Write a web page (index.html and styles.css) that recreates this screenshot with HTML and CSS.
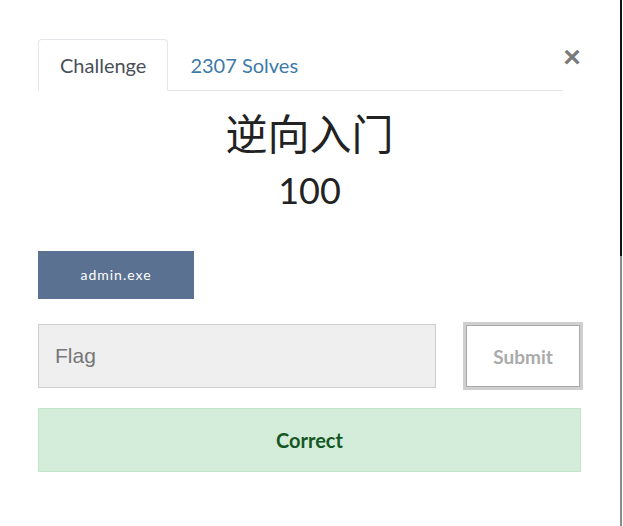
FILE: index.html
```html
<!DOCTYPE html>
<html lang="zh">
<head>
<meta charset="utf-8">
<title>Challenge</title>
<link rel="stylesheet" href="styles.css">
</head>
<body>
<div class="modal">
  <div class="header">
    <ul class="tabs">
      <li><a class="tab active">Challenge</a></li>
      <li><a class="tab">2307 Solves</a></li>
    </ul>
    <button class="close" aria-label="Close">&times;</button>
  </div>
  <h2 class="name">逆向入门</h2>
  <h3 class="value">100</h3>
  <div class="files">
    <a class="file">admin.exe</a>
  </div>
  <div class="submit-row">
    <input class="flag" type="text" placeholder="Flag">
    <button class="submit">Submit</button>
  </div>
  <div class="alert">Correct</div>
</div>
<div class="edge"><div class="edge-top"></div><div class="edge-bottom"></div></div>
</body>
</html>
```
FILE: styles.css
```css
html, body {
  margin: 0;
  padding: 0;
  background: #fff;
}
body {
  font-family: Lato, "Noto Sans CJK SC", sans-serif;
  color: #212529;
}
.modal {
  width: 543px;
  margin-left: 38px;
  padding-top: 39px;
}
.header {
  display: flex;
  align-items: flex-start;
}
.tabs {
  list-style: none;
  margin: 0;
  padding: 0;
  display: flex;
  width: 525px;
  border-bottom: 1px solid #e3e6ea;
}
.tab {
  display: block;
  margin-bottom: -1px;
  padding: 14px 21px;
  font-size: 20px;
  line-height: 22px;
  color: #3e7aa6;
  border: 1px solid transparent;
  border-radius: 4px 4px 0 0;
}
.tab.active {
  color: #495057;
  border-color: #e3e6ea #e3e6ea #fff;
  background: #fff;
}
.close {
  margin-left: 0;
  margin-top: 3px;
  padding: 0;
  width: 18px;
  border: 0;
  background: none;
  font-family: "Liberation Sans", Arial, sans-serif;
  font-size: 30px;
  line-height: 30px;
  font-weight: bold;
  color: #7a7a7a;
}
.name {
  margin: 16px 0 0;
  text-align: center;
  font-family: "Noto Sans CJK SC", sans-serif;
  font-weight: 400;
  font-size: 42px;
  line-height: 50px;
  color: #222;
}
.value {
  margin: 12px 0 0;
  text-align: center;
  font-weight: 400;
  font-size: 36px;
  line-height: 43px;
  color: #222;
}
.files {
  margin-top: 39px;
  display: flex;
}
.file {
  display: block;
  width: 156px;
  height: 48px;
  line-height: 48px;
  text-align: center;
  background: #5a7191;
  color: #fff;
  font-size: 14px;
  letter-spacing: 1px;
}
.submit-row {
  display: flex;
  align-items: center;
  margin-top: 25px;
}
.flag {
  box-sizing: border-box;
  width: 398px;
  height: 64px;
  margin: 0;
  padding: 0 16px;
  border: 1px solid #cfcfcf;
  background: #efefef;
  font-family: "Liberation Sans", Arial, sans-serif;
  font-size: 21px;
  color: #555;
}
.flag::placeholder {
  color: #777;
}
.submit {
  box-sizing: border-box;
  width: 114px;
  height: 62px;
  margin-left: 30px;
  padding: 0;
  border: 1px solid #a9a9a9;
  outline: 3px solid #cfcfcf;
  background: #fff;
  font-family: Lato, sans-serif;
  font-weight: bold;
  font-size: 19px;
  color: #aaa;
}
.alert {
  box-sizing: border-box;
  width: 543px;
  height: 64px;
  margin-top: 20px;
  line-height: 62px;
  text-align: center;
  background: #d4edda;
  border: 1px solid #c3e6cb;
  color: #155724;
  font-weight: bold;
  font-size: 20px;
}
.edge {
  position: absolute;
  top: 0;
  left: 620px;
  width: 2px;
  height: 526px;
  display: flex;
  flex-direction: column;
}
.edge-top {
  height: 256px;
  background: #111;
}
.edge-bottom {
  flex: 1;
  background: #8a8a8a;
}
```
